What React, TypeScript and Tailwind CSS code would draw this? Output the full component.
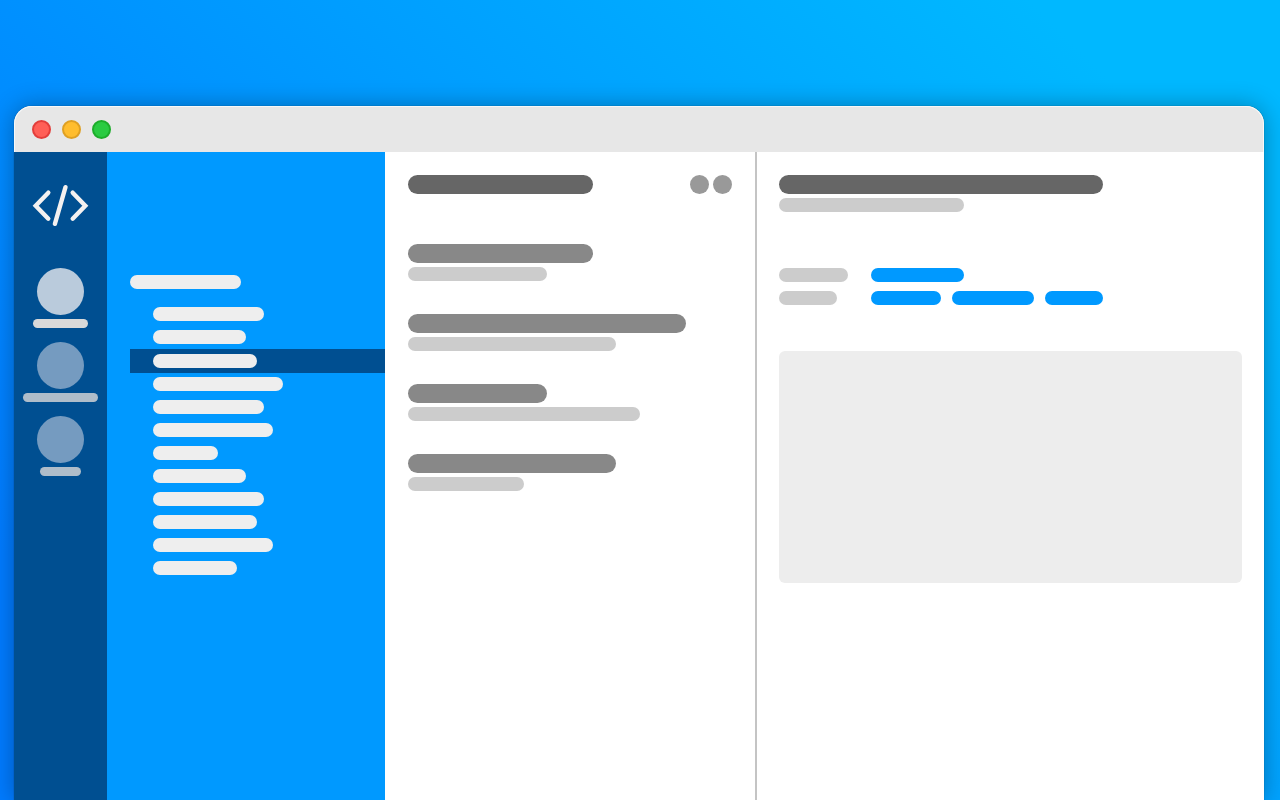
import clsx from 'clsx';

const spaces = [
  { id: 'home', bar: 'w-[55px]', active: true },
  { id: 'library', bar: 'w-[75px]', active: false },
  { id: 'team', bar: 'w-[41px]', active: false },
];

const folders = [
  { id: 1, width: 'w-[111px]' },
  { id: 2, width: 'w-[93px]' },
  { id: 3, width: 'w-[104px]', selected: true },
  { id: 4, width: 'w-[130px]' },
  { id: 5, width: 'w-[111px]' },
  { id: 6, width: 'w-[120px]' },
  { id: 7, width: 'w-[65px]' },
  { id: 8, width: 'w-[93px]' },
  { id: 9, width: 'w-[111px]' },
  { id: 10, width: 'w-[104px]' },
  { id: 11, width: 'w-[120px]' },
  { id: 12, width: 'w-[84px]' },
];

const snippets = [
  { id: 1, title: 'w-[185px]', sub: 'w-[139px]' },
  { id: 2, title: 'w-[278px]', sub: 'w-[208px]' },
  { id: 3, title: 'w-[139px]', sub: 'w-[232px]' },
  { id: 4, title: 'w-[208px]', sub: 'w-[116px]' },
];

function Bar({ className }: { className: string }) {
  return <span className={clsx('block shrink-0 rounded-full', className)} />;
}

function TitleBar() {
  return (
    <header className="flex h-[46px] items-center gap-[11px] rounded-t-[18px] border-x border-t border-white/70 bg-[#e7e7e7] pl-[17px]">
      <button aria-label="Close" className="size-[19px] rounded-full border-2 border-[#e33e3b] bg-[#ff5f57]" />
      <button aria-label="Minimize" className="size-[19px] rounded-full border-2 border-[#dfa023] bg-[#ffbd2e]" />
      <button aria-label="Maximize" className="size-[19px] rounded-full border-2 border-[#1dad2b] bg-[#2acb42]" />
    </header>
  );
}

function Logo() {
  return (
    <svg width="59" height="45" viewBox="0 0 59 45" fill="none" stroke="#f4f1f0" strokeWidth="4.4" strokeLinecap="round">
      <path d="M17.3 9.7 4.7 22.7l12.6 13" />
      <path d="M34.5 4.2 23.9 40.8" />
      <path d="m41.7 9.7 12.6 13-12.6 13" />
    </svg>
  );
}

function Rail() {
  return (
    <nav aria-label="Spaces" className="flex w-[93px] shrink-0 flex-col items-center bg-[#004f91] pt-[31px]">
      <Logo />
      <div className="mt-10 flex flex-col items-center gap-3.5">
        {spaces.map((s) => (
          <button key={s.id} aria-label={s.id} className="flex flex-col items-center gap-1">
            <span className={clsx('block size-[47px] rounded-full', s.active ? 'bg-[#bacbdc]' : 'bg-[#759bc0]')} />
            <Bar className={clsx('h-[9px]', s.bar, s.active ? 'bg-[#d9d9d9]' : 'bg-[#afbdca]')} />
          </button>
        ))}
      </div>
    </nav>
  );
}

function FolderTree() {
  return (
    <aside className="w-[278px] shrink-0 bg-[#0099ff] pt-[123px] pl-[23px]">
      <Bar className="h-3.5 w-[111px] bg-[#eeeeee]" />
      <ul className="mt-3.5">
        {folders.map((f) => (
          <li key={f.id}>
            <button
              aria-label={`Folder ${f.id}`}
              className={clsx(
                'flex w-full pl-[23px]',
                f.selected ? 'h-6 bg-[#004f91] pt-[5px]' : 'h-[23px] pt-1'
              )}
            >
              <Bar className={clsx('h-3.5 bg-[#eeeeee]', f.width)} />
            </button>
          </li>
        ))}
      </ul>
    </aside>
  );
}

function SnippetList() {
  return (
    <section className="w-[372px] shrink-0 border-r-2 border-[#c4c4c4] px-[23px] pt-[23px]">
      <div className="flex items-center justify-between">
        <Bar className="h-[19px] w-[185px] bg-[#666666]" />
        <div className="flex gap-1">
          <button aria-label="Search" className="size-[19px] rounded-full bg-[#999999]" />
          <button aria-label="Add" className="size-[19px] rounded-full bg-[#999999]" />
        </div>
      </div>
      <ul className="mt-[50px] flex flex-col gap-[33px]">
        {snippets.map((s) => (
          <li key={s.id}>
            <button aria-label={`Snippet ${s.id}`} className="flex w-full flex-col gap-1">
              <Bar className={clsx('h-[19px] bg-[#888888]', s.title)} />
              <Bar className={clsx('h-3.5 bg-[#cccccc]', s.sub)} />
            </button>
          </li>
        ))}
      </ul>
    </section>
  );
}

function Detail() {
  return (
    <main className="min-w-0 flex-1 px-[22px] pt-[23px]">
      <Bar className="h-[19px] w-[324px] bg-[#666666]" />
      <Bar className="mt-1 h-3.5 w-[185px] bg-[#cccccc]" />

      {/* properties */}
      <div className="mt-[56px] grid grid-cols-[92px_1fr] gap-y-[9px]">
        <Bar className="h-3.5 w-[69px] bg-[#cccccc]" />
        <Bar className="h-3.5 w-[93px] bg-[#0099ff]" />
        <Bar className="h-3.5 w-[58px] bg-[#cccccc]" />
        <div className="flex gap-[11px]">
          <Bar className="h-3.5 w-[70px] bg-[#0099ff]" />
          <Bar className="h-3.5 w-[82px] bg-[#0099ff]" />
          <Bar className="h-3.5 w-[58px] bg-[#0099ff]" />
        </div>
      </div>

      <div className="mt-[46px] h-[232px] rounded-md bg-[#ededed]" />
    </main>
  );
}

export default function App() {
  return (
    <div className="flex min-h-screen flex-col overflow-hidden bg-[linear-gradient(45deg,#007bff_12%,#00b8ff_88%)] pt-[106px] pr-4 pl-3.5">
      <div className="flex flex-1 flex-col rounded-t-[18px] bg-white shadow-[0_0_1px_rgba(0,0,0,0.6),0_0_24px_rgba(0,0,0,0.3)]">
        <TitleBar />
        <div className="flex flex-1">
          <Rail />
          <FolderTree />
          <SnippetList />
          <Detail />
        </div>
      </div>
    </div>
  );
}
